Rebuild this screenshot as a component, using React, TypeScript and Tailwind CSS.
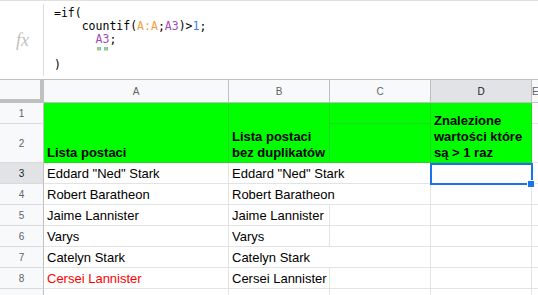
import React from "react";

const GRID = "border-[#e2e3e3]";
const GREEN_LINE = "border-[#22d622]";

function ColHeader({ label, selected, last }: { label: string; selected?: boolean; last?: boolean }) {
  return (
    <div
      className={`flex items-center justify-center border-b border-[#c0c0c0] text-[10px] ${
        last ? "" : "border-r"
      } ${selected ? "bg-[#e1e3e6] text-[#202124]" : "bg-[#f8f9fa] text-[#5f6368]"}`}
    >
      {label}
    </div>
  );
}

function RowNum({ n, selected }: { n: number; selected?: boolean }) {
  return (
    <div
      className={`flex items-center justify-center border-r border-b border-r-[#c0c0c0] border-b-[#dadada] text-[10px] ${
        selected ? "bg-[#e1e3e6] text-[#202124]" : "bg-[#f8f9fa] text-[#5f6368]"
      }`}
    >
      {n}
    </div>
  );
}

function Cell({
  text,
  red,
  noRight,
  children,
}: {
  text?: string;
  red?: boolean;
  noRight?: boolean;
  children?: React.ReactNode;
}) {
  return (
    <div
      className={`relative flex items-end whitespace-nowrap border-b ${GRID} ${
        noRight ? "" : "border-r"
      } px-[3px] pb-[2px] text-[13px] leading-[15px] ${red ? "text-[#ff0000]" : "text-black"}`}
    >
      {text}
      {children}
    </div>
  );
}

const rows: { n: number; a: string; b: string; red?: boolean; bOpen?: boolean }[] = [
  { n: 3, a: 'Eddard "Ned" Stark', b: 'Eddard "Ned" Stark', bOpen: true },
  { n: 4, a: "Robert Baratheon", b: "Robert Baratheon", bOpen: true },
  { n: 5, a: "Jaime Lannister", b: "Jaime Lannister" },
  { n: 6, a: "Varys", b: "Varys" },
  { n: 7, a: "Catelyn Stark", b: "Catelyn Stark", bOpen: true },
  { n: 8, a: "Cersei Lannister", b: "Cersei Lannister", red: true },
  { n: 9, a: "", b: "" },
];

export default function App() {
  return (
    <div className="h-[295px] w-[538px] overflow-hidden bg-white font-['Liberation_Sans',Arial,sans-serif]">
      {/* Formula bar */}
      <div className="flex h-[80px] border-t border-b border-t-[#e0e0e0] border-b-[#c0c0c0]">
        <div className="flex w-[44px] shrink-0 items-center justify-center py-[3px]">
          <div className="flex h-full w-full items-center justify-center border-r border-[#dadce0] pl-[2px]">
            <span className="font-['Liberation_Serif',serif] text-[18px] italic text-[#c0c0c0]">fx</span>
          </div>
        </div>
        <pre className="m-0 pl-[10px] pt-[6px] font-['DejaVu_Sans_Mono',monospace] text-[11.5px] leading-[13px] text-black">
          {"=if(\n    countif("}
          <span className="text-[#f4a03c]">A:A</span>;<span className="text-[#a24bb8]">A3</span>
          {")>"}
          <span className="text-[#3b7ff0]">1</span>
          {";\n      "}
          <span className="text-[#a24bb8]">A3</span>
          {";\n      "}
          <span className="text-[#1e9a3e]">""</span>
          {"\n)"}
        </pre>
      </div>

      {/* Sheet */}
      <div className="grid grid-cols-[44px_185px_101px_101px_101px_1fr] grid-rows-[23px_21px_39px_repeat(7,21px)]">
        <div className="border-r-4 border-b-4 border-[#c0c0c0] bg-[#f8f9fa]" />
        <ColHeader label="A" />
        <ColHeader label="B" />
        <ColHeader label="C" />
        <ColHeader label="D" selected />
        <ColHeader label="E" last />

        {/* rows 1-2 */}
        <RowNum n={1} />
        <div
          className={`row-span-2 flex items-end border-r border-b ${GREEN_LINE} bg-[#00ff00] px-[3px] pb-[1px] text-[13px] font-bold leading-[16px] text-black`}
        >
          Lista postaci
        </div>
        <div
          className={`row-span-2 flex items-end border-r border-b ${GREEN_LINE} bg-[#00ff00] px-[3px] pb-[1px] text-[13px] font-bold leading-[16px] text-black`}
        >
          Lista postaci
          <br />
          bez duplikatów
        </div>
        <div className={`border-r border-b ${GREEN_LINE} bg-[#00ff00]`} />
        <div
          className={`row-span-2 flex items-end border-r border-b ${GREEN_LINE} bg-[#00ff00] px-[3px] pb-[1px] text-[13px] font-bold leading-[16px] text-black`}
        >
          Znalezione
          <br />
          wartości które
          <br />
          są &gt; 1 raz
        </div>
        <div className={`border-b ${GRID}`} />
        <RowNum n={2} />
        <div className={`border-r border-b ${GREEN_LINE} bg-[#00ff00]`} />
        <div className={`border-b ${GRID}`} />

        {rows.map((r) => (
          <React.Fragment key={r.n}>
            <RowNum n={r.n} selected={r.n === 3} />
            <Cell text={r.a} red={r.red} />
            <Cell text={r.b} noRight={r.bOpen} />
            <Cell />
            <Cell>
              {r.n === 3 && (
                <>
                  <div className="absolute top-0 left-[-1px] right-[-2px] bottom-[-2px] z-10 border-2 border-[#1a73e8]" />
                  <div className="absolute left-[96px] top-[17px] z-20 h-[8px] w-[8px] border border-white bg-[#1a73e8]" />
                </>
              )}
            </Cell>
            <div className={`border-b ${GRID}`} />
          </React.Fragment>
        ))}
      </div>
    </div>
  );
}
